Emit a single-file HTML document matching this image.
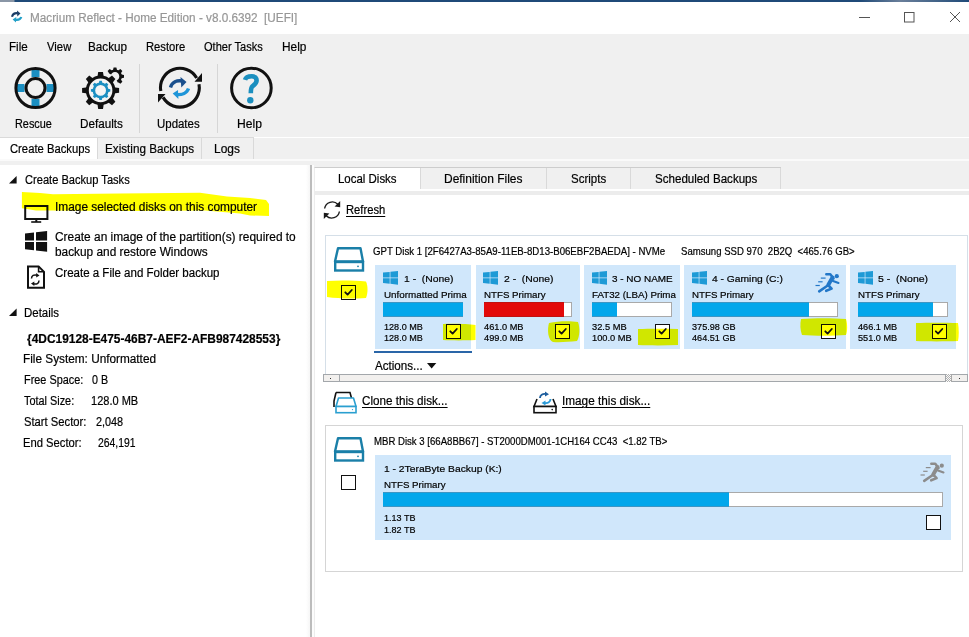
<!DOCTYPE html>
<html><head><meta charset="utf-8">
<style>
*{margin:0;padding:0;box-sizing:border-box}
html,body{width:969px;height:637px;overflow:hidden;background:#fff;position:relative}
body{font-family:"Liberation Sans",sans-serif;color:#000}
.a{position:absolute}
.t{position:absolute;line-height:1;white-space:pre;font-family:"Liberation Sans",sans-serif;transform-origin:0 0;-webkit-text-stroke:0.2px currentColor}
.tile{position:absolute;background:#d0e7fb;top:265px;height:84px}
.bar{position:absolute;background:#fff;border:1px solid #a9a9a9;top:302px;height:15px}
.fill{position:absolute;left:-1px;top:-1px;bottom:-1px;background:#02a7eb;border-top:1px solid #3c96c4;border-bottom:1px solid #3c96c4}
.cb{position:absolute;width:15px;height:15px;border:1.5px solid #111;background:#fff}
svg{position:absolute;left:0;top:0;overflow:visible}
.u{text-decoration:underline;text-underline-offset:1.5px;text-decoration-thickness:1px}
.hl{mix-blend-mode:multiply}
</style></head><body>

<!-- title bar -->
<div class="a" style="left:0;top:0;width:969px;height:2px;background:linear-gradient(90deg,#8a96a6 0,#8a96a6 14px,#1f4a78 15px,#1f4a78 860px,#6a7f9a 900px,#1f4a78 969px)"></div>

<!-- menu bar + toolbar -->
<div class="a" style="left:0;top:34px;width:969px;height:103px;background:#f0f0f0"></div>
<div class="a" style="left:0;top:137px;width:254px;height:1px;background:#dadada"></div>
<div class="a" style="left:139px;top:64px;width:1px;height:69px;background:#d6d6d6"></div>
<div class="a" style="left:217px;top:64px;width:1px;height:69px;background:#d6d6d6"></div>

<!-- tab row -->
<div class="a" style="left:0;top:138px;width:969px;height:27px;background:#f0f0f0"></div>
<div class="a" style="left:0;top:138px;width:97px;height:22px;background:#fff"></div>
<div class="a" style="left:97px;top:138px;width:1px;height:22px;background:#d9d9d9"></div>
<div class="a" style="left:201px;top:138px;width:1px;height:22px;background:#d9d9d9"></div>
<div class="a" style="left:253px;top:138px;width:1px;height:22px;background:#d9d9d9"></div>
<div class="a" style="left:0;top:159px;width:969px;height:2px;background:#fafafa"></div>

<!-- left panel -->
<div class="a" style="left:0;top:165px;width:307px;height:472px;background:#fff"></div>
<div class="a" style="left:306px;top:165px;width:4px;height:472px;background:linear-gradient(90deg,#fff,#f6f6f6)"></div>
<div class="a" style="left:310px;top:165px;width:2px;height:472px;background:#bcbcbc"></div>

<svg width="969" height="637">
  <polygon points="16.6,176 16.6,183.6 9,183.6" fill="#111"/>
  <polygon points="16.6,308.4 16.6,316 9,316" fill="#111"/>
  <!-- monitor -->
  <rect x="25.2" y="206" width="22.2" height="13" fill="none" stroke="#111" stroke-width="2"/>
  <rect x="35.3" y="219" width="2" height="3" fill="#111"/>
  <rect x="31.2" y="221.2" width="10" height="1.6" fill="#111"/>
  <!-- windows logo -->
  <polygon points="25,233.6 34,232.6 34,240.5 25,240.5" fill="#111"/>
  <polygon points="36,232.2 47.1,231 47.1,240.5 36,240.5" fill="#111"/>
  <polygon points="25,242 34,242 34,250.3 25,249.3" fill="#111"/>
  <polygon points="36,242 47.1,242 47.1,251.8 36,250.6" fill="#111"/>
  <!-- file icon -->
  <path d="M28,266.4 L38.6,266.4 L44,271.8 L44,287.8 L28,287.8 Z" fill="#fff" stroke="#111" stroke-width="2"/>
  <path d="M38.6,266.4 L38.6,271.8 L44,271.8" fill="none" stroke="#111" stroke-width="1.6"/>
  <path d="M31.5,278.5 C31.5,275.5 34,274.5 37,275.2" fill="none" stroke="#111" stroke-width="1.5"/>
  <polygon points="36.2,273 39.5,275.5 36.2,277.5" fill="#111"/>
  <path d="M39,280.5 C39,283.5 36.5,284.5 33.5,283.8" fill="none" stroke="#111" stroke-width="1.5"/>
  <polygon points="34.3,281.5 31,283.5 34.3,286" fill="#111"/>
</svg>

<!-- RIGHT PANEL -->
<div class="a" style="left:312px;top:161px;width:657px;height:476px;background:#f0f0f0"></div><div class="a" style="left:312px;top:165px;width:2px;height:472px;background:#fcfcfc"></div>
<div class="a" style="left:314px;top:167px;width:655px;height:470px;background:#fff;border-left:1px solid #ececec;border-top:1px solid #cdcdcd"></div>
<div class="a" style="left:315px;top:191px;width:654px;height:4px;background:#ececec"></div>
<div class="a" style="left:420px;top:168px;width:549px;height:21px;background:#f0f0f0"></div>
<div class="a" style="left:420px;top:168px;width:1px;height:21px;background:#d9d9d9"></div>
<div class="a" style="left:546px;top:168px;width:1px;height:21px;background:#d9d9d9"></div>
<div class="a" style="left:630px;top:168px;width:1px;height:21px;background:#d9d9d9"></div>
<div class="a" style="left:780px;top:168px;width:1px;height:21px;background:#d9d9d9"></div>
<div class="a" style="left:781px;top:167px;width:188px;height:22px;background:#f0f0f0"></div>

<!-- refresh -->
<svg width="969" height="637">
  <path d="M324.6,208.5 A7.8,7.8 0 0 1 337.8,204.2" fill="none" stroke="#1a1a1a" stroke-width="1.4"/>
  <polygon points="340.2,201 340.2,207.2 334.6,206.6" fill="#1a1a1a"/>
  <path d="M339.4,211.5 A7.8,7.8 0 0 1 326.2,215.8" fill="none" stroke="#1a1a1a" stroke-width="1.4"/>
  <polygon points="323.8,219 323.8,212.8 329.4,213.4" fill="#1a1a1a"/>
</svg>

<!-- disk box 1 -->
<div class="a" style="left:325px;top:235px;width:643px;height:140px;border:1px solid #d5dfe8;border-bottom:0"></div>
<svg width="969" height="637">
  <path d="M338,248.2 L360.5,248.2 L363,261.5 L335,261.5 Z" fill="none" stroke="#1a7fa8" stroke-width="2.4" stroke-linejoin="round"/>
  <rect x="335.2" y="262" width="27.8" height="8.5" fill="none" stroke="#1a7fa8" stroke-width="2.4"/>
  <circle cx="358" cy="266.3" r="0.9" fill="#1a7fa8"/>
</svg>
<div class="cb" style="left:341px;top:285px"></div>

<div class="tile" style="left:375px;width:96px"></div>
<div class="tile" style="left:476px;width:104px"></div>
<div class="tile" style="left:584px;width:96px"></div>
<div class="tile" style="left:684px;width:162px"></div>
<div class="tile" style="left:850px;width:106px"></div>
<div class="a" style="left:374px;top:351px;width:98px;height:2px;background:#2a66a8"></div>

<div class="bar" style="left:383px;width:80px"><div class="fill" style="width:80px"></div></div>
<div class="bar" style="left:484px;width:88px"><div class="fill" style="width:80px;background:#e30909;border-color:#c01010"></div></div>
<div class="bar" style="left:592px;width:80px"><div class="fill" style="width:25px"></div></div>
<div class="bar" style="left:692px;width:146px"><div class="fill" style="width:117px"></div></div>
<div class="bar" style="left:858px;width:90px"><div class="fill" style="width:75px"></div></div>

<svg width="969" height="637">
  <defs><g id="wl"><polygon points="0,1.6 6.7,0.9 6.7,6.4 0,6.4"/><polygon points="7.4,0.8 15,0 15,6.4 7.4,6.4"/><polygon points="0,7.2 6.7,7.2 6.7,12.7 0,12"/><polygon points="7.4,7.2 15,7.2 15,13.7 7.4,12.8"/></g></defs>
  <g fill="#1e9ad6">
  <use href="#wl" x="383" y="271"/>
  <use href="#wl" x="483" y="271"/>
  <use href="#wl" x="592" y="271"/>
  <use href="#wl" x="692" y="271"/>
  <use href="#wl" x="858" y="271"/>
  </g>
</svg>

<div class="cb" style="left:446px;top:324px"></div>
<div class="cb" style="left:555px;top:324px"></div>
<div class="cb" style="left:655px;top:324px"></div>
<div class="cb" style="left:821px;top:324px"></div>
<div class="cb" style="left:931.5px;top:324px"></div>

<!-- running man tile 4 -->
<svg width="969" height="637">
 <g style="color:#2277c8"><g id="man" fill="none" stroke-linecap="round" stroke-linejoin="round">
  <circle cx="836.8" cy="276.2" r="2.1" stroke="none" fill="currentColor"/>
  <polyline points="826.3,274.3 830.3,274.3 833.5,278.5" stroke="currentColor" stroke-width="2.5"/>
  <line x1="832.5" y1="277.5" x2="828.2" y2="285" stroke="currentColor" stroke-width="3.9"/>
  <line x1="833" y1="281" x2="838.5" y2="283" stroke="currentColor" stroke-width="2.1"/>
  <line x1="827" y1="286" x2="819.2" y2="291.3" stroke="currentColor" stroke-width="2.6"/>
  <polyline points="828.5,285.5 831.6,288.6 826.2,290.8" stroke="currentColor" stroke-width="2.6"/>
  <line x1="820.8" y1="278.1" x2="825.6" y2="278.1" stroke="currentColor" stroke-width="1.2" stroke-linecap="butt"/>
  <line x1="818.2" y1="281.8" x2="822.6" y2="281.8" stroke="currentColor" stroke-width="1.2" stroke-linecap="butt"/>
  <line x1="815.5" y1="285.5" x2="819.8" y2="285.5" stroke="currentColor" stroke-width="1.2" stroke-linecap="butt"/>
 </g></g>
 <polygon points="427,363 436.3,363 431.65,368.5" fill="#111"/>
</svg>

<!-- scrollbar -->
<div class="a" style="left:323px;top:374px;width:645px;height:8px;background:#f2f0ee;border:1px solid #a3a7ab"></div>
<div class="a" style="left:339px;top:374px;width:1px;height:8px;background:#a3a7ab"></div>
<div class="a" style="left:945px;top:374px;width:6px;height:8px;background:repeating-conic-gradient(#b0b0b0 0 25%,#fafafa 0 50%) 0 0/2px 2px"></div><div class="a" style="left:951px;top:374px;width:1px;height:8px;background:#a3a7ab"></div><div class="a" style="left:944.5px;top:374px;width:1px;height:8px;background:#a3a7ab"></div>
<div class="a" style="left:951px;top:374px;width:1px;height:8px;background:#a8a8a8"></div>
<div class="a" style="left:330px;top:377.5px;width:1px;height:1px;background:#333"></div>
<div class="a" style="left:959px;top:377.5px;width:1px;height:1px;background:#333"></div>

<!-- links -->
<svg width="969" height="637">
  <path d="M336,392.5 L350,392.5 L352,400 M334,407 L334,401 L336,392.5" fill="none" stroke="#111" stroke-width="1.6"/>
  <path d="M338.5,398 L353.5,398 L356,406.5 L336,406.5 Z" fill="#fff" stroke="#2a9fd0" stroke-width="1.6" stroke-linejoin="round"/>
  <rect x="336" y="406.5" width="20" height="6.2" fill="#fff" stroke="#2a9fd0" stroke-width="1.6"/>
  <circle cx="352.5" cy="409.6" r="0.7" fill="#2a9fd0"/>
  <path d="M537,399 L534,406.5 L556,406.5 L553,399" fill="none" stroke="#111" stroke-width="1.6"/>
  <rect x="534" y="406.5" width="22" height="6.2" fill="#fff" stroke="#111" stroke-width="1.6"/>
  <circle cx="552.2" cy="409.6" r="0.8" fill="#111"/>
  <path d="M540,398 C540,395 542.5,393.5 546,394" fill="none" stroke="#1f5f9f" stroke-width="1.9"/>
  <polygon points="545,391.5 549,394.2 545,396.5" fill="#1f5f9f"/>
  <path d="M550.5,399 C550.5,402 548,403.5 544.5,403" fill="none" stroke="#2a9ad8" stroke-width="1.9"/>
  <polygon points="545.5,400.5 541.5,403 545.5,405.5" fill="#2a9ad8"/>
</svg>

<!-- disk box 2 -->
<div class="a" style="left:325px;top:425px;width:638px;height:147px;border:1px solid #d5d5d5"></div>
<svg width="969" height="637">
  <path d="M338,438.2 L360.5,438.2 L363,451.5 L335,451.5 Z" fill="none" stroke="#1a7fa8" stroke-width="2.4" stroke-linejoin="round"/>
  <rect x="335.2" y="452" width="27.8" height="8.5" fill="none" stroke="#1a7fa8" stroke-width="2.4"/>
  <circle cx="358" cy="456.3" r="0.9" fill="#1a7fa8"/>
</svg>
<div class="cb" style="left:341px;top:475px"></div>
<div class="tile" style="left:375px;top:455px;width:576px;height:84.5px"></div>
<div class="bar" style="left:383px;top:492px;width:560px"><div class="fill" style="width:346px"></div></div>
<div class="cb" style="left:926px;top:515px"></div>
<svg width="969" height="637">
 <use href="#man" x="105" y="189.5" style="color:#8c8c8c"/>
</svg>

<!-- toolbar icons -->
<svg width="969" height="637">
  <g fill="#1b8fc2">
    <rect x="31.5" y="68" width="8" height="9"/>
    <rect x="31.5" y="99" width="8" height="9"/>
    <rect x="15.5" y="84" width="9" height="8"/>
    <rect x="46.5" y="84" width="9" height="8"/>
  </g>
  <circle cx="35.5" cy="88" r="19.6" fill="none" stroke="#111" stroke-width="3"/>
  <circle cx="35.5" cy="88" r="9.5" fill="none" stroke="#111" stroke-width="3"/>

  <circle cx="115" cy="76.4" r="5.6" fill="none" stroke="#111" stroke-width="2.6"/>
  <g fill="#111" transform="translate(115,76.4)">
    <polygon points="-2.2,-5.5 2.2,-5.5 1.4,-9.0 -1.4,-9.0" transform="rotate(0)"/>
    <polygon points="-2.2,-5.5 2.2,-5.5 1.4,-9.0 -1.4,-9.0" transform="rotate(45)"/>
    <polygon points="-2.2,-5.5 2.2,-5.5 1.4,-9.0 -1.4,-9.0" transform="rotate(90)"/>
    <polygon points="-2.2,-5.5 2.2,-5.5 1.4,-9.0 -1.4,-9.0" transform="rotate(135)"/>
    <polygon points="-2.2,-5.5 2.2,-5.5 1.4,-9.0 -1.4,-9.0" transform="rotate(-45)"/>
    <polygon points="-2.2,-5.5 2.2,-5.5 1.4,-9.0 -1.4,-9.0" transform="rotate(-90)"/>
    <polygon points="-2.2,-5.5 2.2,-5.5 1.4,-9.0 -1.4,-9.0" transform="rotate(-135)"/>
  </g>
  <circle cx="100.6" cy="90.4" r="19" fill="#f0f0f0"/>
  <g fill="#111" transform="translate(100.6,90.4)">
    <polygon points="-3.2,-13 3.2,-13 2.4000000000000004,-18.5 -2.4000000000000004,-18.5" transform="rotate(0)"/>
    <polygon points="-3.2,-13 3.2,-13 2.4000000000000004,-18.5 -2.4000000000000004,-18.5" transform="rotate(45)"/>
    <polygon points="-3.2,-13 3.2,-13 2.4000000000000004,-18.5 -2.4000000000000004,-18.5" transform="rotate(90)"/>
    <polygon points="-3.2,-13 3.2,-13 2.4000000000000004,-18.5 -2.4000000000000004,-18.5" transform="rotate(135)"/>
    <polygon points="-3.2,-13 3.2,-13 2.4000000000000004,-18.5 -2.4000000000000004,-18.5" transform="rotate(180)"/>
    <polygon points="-3.2,-13 3.2,-13 2.4000000000000004,-18.5 -2.4000000000000004,-18.5" transform="rotate(225)"/>
    <polygon points="-3.2,-13 3.2,-13 2.4000000000000004,-18.5 -2.4000000000000004,-18.5" transform="rotate(270)"/>
    <polygon points="-3.2,-13 3.2,-13 2.4000000000000004,-18.5 -2.4000000000000004,-18.5" transform="rotate(315)"/>
  </g>
  <circle cx="100.6" cy="90.4" r="13.3" fill="#f4f4f4" stroke="#111" stroke-width="3"/>
  <g fill="#1b8fc2" transform="translate(100.6,90.4)">
    <polygon points="-2.0,-6.5 2.0,-6.5 1.2,-9.7 -1.2,-9.7" transform="rotate(0)"/>
    <polygon points="-2.0,-6.5 2.0,-6.5 1.2,-9.7 -1.2,-9.7" transform="rotate(45)"/>
    <polygon points="-2.0,-6.5 2.0,-6.5 1.2,-9.7 -1.2,-9.7" transform="rotate(90)"/>
    <polygon points="-2.0,-6.5 2.0,-6.5 1.2,-9.7 -1.2,-9.7" transform="rotate(135)"/>
    <polygon points="-2.0,-6.5 2.0,-6.5 1.2,-9.7 -1.2,-9.7" transform="rotate(180)"/>
    <polygon points="-2.0,-6.5 2.0,-6.5 1.2,-9.7 -1.2,-9.7" transform="rotate(225)"/>
    <polygon points="-2.0,-6.5 2.0,-6.5 1.2,-9.7 -1.2,-9.7" transform="rotate(270)"/>
    <polygon points="-2.0,-6.5 2.0,-6.5 1.2,-9.7 -1.2,-9.7" transform="rotate(315)"/>
  </g>
  <circle cx="100.6" cy="90.4" r="6.7" fill="none" stroke="#1b8fc2" stroke-width="2.6"/>

  <!-- updates -->
  <path d="M160.8,91.1 A19.4,19.4 0 0 1 196.7,78" fill="none" stroke="#111" stroke-width="3.1"/>
  <polygon points="194.5,81.8 202,81.8 202,73" fill="#111"/>
  <path d="M199,84.3 A19.4,19.4 0 0 1 163.1,97.4" fill="none" stroke="#111" stroke-width="3.1"/>
  <polygon points="165.5,94 158,94 158,102.5" fill="#111"/>
  <path d="M170.5,87.5 C172,82 177,80 182.5,81" fill="none" stroke="#1a4f8c" stroke-width="3.4"/>
  <polygon points="180.5,77 186.5,82 181.3,87.4" fill="#1a4f8c"/>
  <path d="M188.5,88.5 C187,93 182,95 176.5,94.5" fill="none" stroke="#1e95d8" stroke-width="3.4"/>
  <polygon points="178,90 172.7,93.5 178.4,99" fill="#1e95d8"/>

  <!-- help -->
  <circle cx="251.4" cy="88" r="19.8" fill="none" stroke="#111" stroke-width="3"/>
  <path d="M245,79.8 C246,76.5 248.8,76.2 251.8,76.2 C255,76.2 256.6,78.2 256.6,80.6 C256.6,83.5 254,85 252.5,86.3 C251,87.6 250.8,89 250.8,93.2" fill="none" stroke="#1b8fbf" stroke-width="4.6"/>
  <circle cx="250.3" cy="100.2" r="3.2" fill="#1b8fbf"/>

  <!-- title icon -->
  <path d="M12,16.8 C12.8,14 15,12.9 17.8,13.3" fill="none" stroke="#1b3d66" stroke-width="2.2"/>
  <polygon points="17,10.6 20.5,13.5 17.3,16.4" fill="#1b3d66"/>
  <path d="M21.3,17 C20.5,19.4 18.4,20.1 15.6,19.8" fill="none" stroke="#23a0c8" stroke-width="2.2"/>
  <polygon points="16.3,17 12.6,19.6 16,22.5" fill="#23a0c8"/>
  <!-- window controls -->
  <path d="M859,17.5 L870,17.5" stroke="#555" stroke-width="1"/>
  <rect x="904.5" y="12.5" width="9.5" height="9.5" fill="none" stroke="#555" stroke-width="1"/>
  <path d="M950,12 L960,22 M960,12 L950,22" stroke="#555" stroke-width="1"/>
</svg>

<div class="t " style="left:30.05px;top:12.00px;font-size:12.3px;color:#969696;transform:scaleX(0.9542)">Macrium Reflect - Home Edition - v8.0.6392  [UEFI]</div>
<div class="t " style="left:9.26px;top:41.00px;font-size:12.3px;color:#000;transform:scaleX(0.9433)">File</div>
<div class="t " style="left:46.60px;top:41.00px;font-size:12.3px;color:#000;transform:scaleX(0.9190)">View</div>
<div class="t " style="left:88.25px;top:41.00px;font-size:12.3px;color:#000;transform:scaleX(0.9533)">Backup</div>
<div class="t " style="left:145.59px;top:41.00px;font-size:12.3px;color:#000;transform:scaleX(0.9119)">Restore</div>
<div class="t " style="left:203.70px;top:41.00px;font-size:12.3px;color:#000;transform:scaleX(0.8999)">Other Tasks</div>
<div class="t " style="left:281.73px;top:41.00px;font-size:12.3px;color:#000;transform:scaleX(0.9652)">Help</div>
<div class="t " style="left:14.82px;top:118.00px;font-size:12.3px;color:#000;transform:scaleX(0.8836)">Rescue</div>
<div class="t " style="left:79.75px;top:118.00px;font-size:12.3px;color:#000;transform:scaleX(0.9508)">Defaults</div>
<div class="t " style="left:157.30px;top:118.00px;font-size:12.3px;color:#000;transform:scaleX(0.9309)">Updates</div>
<div class="t " style="left:236.51px;top:118.00px;font-size:12.3px;color:#000;transform:scaleX(0.9856)">Help</div>
<div class="t " style="left:9.70px;top:143.00px;font-size:12.3px;color:#000;transform:scaleX(0.9148)">Create Backups</div>
<div class="t " style="left:105.15px;top:143.00px;font-size:12.3px;color:#000;transform:scaleX(0.9504)">Existing Backups</div>
<div class="t " style="left:214.03px;top:143.00px;font-size:12.3px;color:#000;transform:scaleX(0.9719)">Logs</div>
<div class="t " style="left:24.90px;top:174.00px;font-size:12.3px;color:#000;transform:scaleX(0.9031)">Create Backup Tasks</div>
<div class="t " style="left:55.03px;top:201.00px;font-size:12.3px;color:#000;transform:scaleX(0.9661)">Image selected disks on this computer</div>
<div class="t " style="left:55.40px;top:231.00px;font-size:12.3px;color:#000;transform:scaleX(0.9676)">Create an image of the partition(s) required to</div>
<div class="t " style="left:55.40px;top:246.00px;font-size:12.3px;color:#000;transform:scaleX(0.9632)">backup and restore Windows</div>
<div class="t " style="left:55.40px;top:267.00px;font-size:12.3px;color:#000;transform:scaleX(0.9361)">Create a File and Folder backup</div>
<div class="t " style="left:23.87px;top:307.00px;font-size:12.3px;color:#000;transform:scaleX(0.9331)">Details</div>
<div class="t " style="left:27.00px;top:333.00px;font-size:12.3px;color:#000;transform:scaleX(0.9700);font-weight:bold">{4DC19128-E475-46B7-AEF2-AFB987428553}</div>
<div class="t " style="left:23.44px;top:353.00px;font-size:12.3px;color:#000;transform:scaleX(0.9588)">File System: Unformatted</div>
<div class="t " style="left:23.52px;top:374.00px;font-size:12.3px;color:#000;transform:scaleX(0.8846)">Free Space:</div>
<div class="t " style="left:91.90px;top:374.00px;font-size:12.3px;color:#000;transform:scaleX(0.8710)">0 B</div>
<div class="t " style="left:24.40px;top:395.00px;font-size:12.3px;color:#000;transform:scaleX(0.8844)">Total Size:</div>
<div class="t " style="left:90.50px;top:395.00px;font-size:12.3px;color:#000;transform:scaleX(0.8964)">128.0 MB</div>
<div class="t " style="left:24.40px;top:416.00px;font-size:12.3px;color:#000;transform:scaleX(0.9128)">Start Sector:</div>
<div class="t " style="left:95.80px;top:416.00px;font-size:12.3px;color:#000;transform:scaleX(0.8825)">2,048</div>
<div class="t " style="left:23.49px;top:437.00px;font-size:12.3px;color:#000;transform:scaleX(0.9135)">End Sector:</div>
<div class="t " style="left:98.00px;top:437.00px;font-size:12.3px;color:#000;transform:scaleX(0.8428)">264,191</div>
<div class="t " style="left:338.37px;top:173.00px;font-size:12.3px;color:#000;transform:scaleX(0.9316)">Local Disks</div>
<div class="t " style="left:444.43px;top:173.00px;font-size:12.3px;color:#000;transform:scaleX(0.9724)">Definition Files</div>
<div class="t " style="left:571.00px;top:173.00px;font-size:12.3px;color:#000;transform:scaleX(0.9350)">Scripts</div>
<div class="t " style="left:654.70px;top:173.00px;font-size:12.3px;color:#000;transform:scaleX(0.9415)">Scheduled Backups</div>
<div class="t u" style="left:345.59px;top:204.00px;font-size:12.3px;color:#000;transform:scaleX(0.9119)">Refresh</div>
<div class="t " style="left:374.60px;top:360.00px;font-size:12.3px;color:#000;transform:scaleX(0.9450)">Actions...</div>
<div class="t u" style="left:362.30px;top:395.00px;font-size:12.3px;color:#000;transform:scaleX(0.9488)">Clone this disk...</div>
<div class="t u" style="left:561.64px;top:395.00px;font-size:12.3px;color:#000;transform:scaleX(0.9566)">Image this disk...</div>
<div class="t " style="left:373.40px;top:247.00px;font-size:10.3px;color:#000;transform:scaleX(0.9362)">GPT Disk 1 [2F6427A3-85A9-11EB-8D13-B06EBF2BAEDA] - NVMe</div>
<div class="t " style="left:681.40px;top:247.00px;font-size:10.3px;color:#000;transform:scaleX(0.9304)">Samsung SSD 970  2B2Q  &lt;465.76 GB&gt;</div>
<div class="t " style="left:373.80px;top:437.00px;font-size:10.3px;color:#000;transform:scaleX(0.9324)">MBR Disk 3 [66A8BB67] - ST2000DM001-1CH164 CC43  &lt;1.82 TB&gt;</div>
<div class="a" style="left:0;top:0;width:467px;height:637px;overflow:hidden"><div class="t " style="left:403.50px;top:274.00px;font-size:9.9px;color:#000;transform:scaleX(1.0489)">1 -  (None)</div></div>
<div class="a" style="left:0;top:0;width:467px;height:637px;overflow:hidden"><div class="t " style="left:383.70px;top:290.00px;font-size:9.9px;color:#000;transform:scaleX(0.9979)">Unformatted Prima</div></div>
<div class="t " style="left:383.70px;top:322.00px;font-size:9.9px;color:#000;transform:scaleX(0.9184)">128.0 MB</div>
<div class="t " style="left:383.70px;top:333.00px;font-size:9.9px;color:#000;transform:scaleX(0.9184)">128.0 MB</div>
<div class="a" style="left:0;top:0;width:577px;height:637px;overflow:hidden"><div class="t " style="left:503.50px;top:274.00px;font-size:9.9px;color:#000;transform:scaleX(1.0489)">2 -  (None)</div></div>
<div class="a" style="left:0;top:0;width:577px;height:637px;overflow:hidden"><div class="t " style="left:483.70px;top:290.00px;font-size:9.9px;color:#000;transform:scaleX(0.9840)">NTFS Primary</div></div>
<div class="t " style="left:483.70px;top:322.00px;font-size:9.9px;color:#000;transform:scaleX(0.9348)">461.0 MB</div>
<div class="t " style="left:483.70px;top:333.00px;font-size:9.9px;color:#000;transform:scaleX(0.9348)">499.0 MB</div>
<div class="a" style="left:0;top:0;width:677px;height:637px;overflow:hidden"><div class="t " style="left:611.50px;top:274.00px;font-size:9.9px;color:#000;transform:scaleX(1.0055)">3 - NO NAME</div></div>
<div class="a" style="left:0;top:0;width:677px;height:637px;overflow:hidden"><div class="t " style="left:592.40px;top:290.00px;font-size:9.9px;color:#000;transform:scaleX(0.9885)">FAT32 (LBA) Prima</div></div>
<div class="t " style="left:592.40px;top:322.00px;font-size:9.9px;color:#000;transform:scaleX(0.9411)">32.5 MB</div>
<div class="t " style="left:592.40px;top:333.00px;font-size:9.9px;color:#000;transform:scaleX(0.9411)">100.0 MB</div>
<div class="a" style="left:0;top:0;width:843px;height:637px;overflow:hidden"><div class="t " style="left:712.20px;top:274.00px;font-size:9.9px;color:#000;transform:scaleX(1.0406)">4 - Gaming (C:)</div></div>
<div class="a" style="left:0;top:0;width:843px;height:637px;overflow:hidden"><div class="t " style="left:692.10px;top:290.00px;font-size:9.9px;color:#000;transform:scaleX(0.9840)">NTFS Primary</div></div>
<div class="t " style="left:692.10px;top:322.00px;font-size:9.9px;color:#000;transform:scaleX(0.9238)">375.98 GB</div>
<div class="t " style="left:692.10px;top:333.00px;font-size:9.9px;color:#000;transform:scaleX(0.9238)">464.51 GB</div>
<div class="a" style="left:0;top:0;width:953px;height:637px;overflow:hidden"><div class="t " style="left:878.10px;top:274.00px;font-size:9.9px;color:#000;transform:scaleX(1.0617)">5 -  (None)</div></div>
<div class="a" style="left:0;top:0;width:953px;height:637px;overflow:hidden"><div class="t " style="left:858.00px;top:290.00px;font-size:9.9px;color:#000;transform:scaleX(0.9840)">NTFS Primary</div></div>
<div class="t " style="left:858.00px;top:322.00px;font-size:9.9px;color:#000;transform:scaleX(0.9278)">466.1 MB</div>
<div class="t " style="left:858.00px;top:333.00px;font-size:9.9px;color:#000;transform:scaleX(0.9278)">551.0 MB</div>
<div class="t " style="left:383.70px;top:464.00px;font-size:9.9px;color:#000;transform:scaleX(1.0419)">1 - 2TeraByte Backup (K:)</div>
<div class="t " style="left:383.70px;top:480.00px;font-size:9.9px;color:#000;transform:scaleX(0.9840)">NTFS Primary</div>
<div class="t " style="left:383.70px;top:513.00px;font-size:9.9px;color:#000;transform:scaleX(0.9144)">1.13 TB</div>
<div class="t " style="left:383.70px;top:525.00px;font-size:9.9px;color:#000;transform:scaleX(0.9144)">1.82 TB</div>

<!-- yellow highlights -->
<svg width="969" height="637" class="hl">
 <g fill="#ffff00">
  <path d="M21.9,192 L40,193 L53,194.3 L120,193.5 L200,192.8 L227,196.5 L250,198 L266,200 L269,204 L269,216 L250,215.5 L240,213.5 L205,210.6 L120,211 L52,210.4 L36,210.4 L21.9,208.2 Z"/>
  <path d="M327,281 C340,280 355,280.5 366,281.5 C368,286 368,293 366,298 C350,299 338,298.5 327,297 Z"/>
  <path d="M443,324 C455,323.5 468,324 475.5,325 L475.5,340 C465,340.5 452,340.5 443,340 Z"/>
  <path d="M549,323 C558,321 570,321 578,322 C580,328 580,336 577,341 C568,342 560,342.5 553,342 C548,340 547,330 549,323 Z"/>
  <path d="M638,329 C650,328.5 665,328.5 678,329 L678,345 C665,345.5 650,345.5 638,345 Z"/>
  <path d="M801,319 C815,318 832,318 846,319 C847.5,324 847.5,331 846,335 C832,336 815,336 802,335 C800,330 800,324 801,319 Z"/>
  <path d="M916,323 C928,322.5 945,322.5 958,323 C959,329 959,336 958,341 C945,341.5 928,341.5 916,341 Z"/>
 </g>
</svg>
<svg width="969" height="637">
 <g fill="none" stroke="#111" stroke-width="1.8" stroke-linecap="round" stroke-linejoin="round">
  <path d="M345.3,292.3 L347.6,294.6 L351.8,290"/>
  <path d="M450.3,331.3 L452.6,333.6 L456.8,329"/>
  <path d="M559.3,331.3 L561.6,333.6 L565.8,329"/>
  <path d="M659.3,331.3 L661.6,333.6 L665.8,329"/>
  <path d="M825.3,331.3 L827.6,333.6 L831.8,329"/>
  <path d="M935.8,331.3 L938.1,333.6 L942.3,329"/>
 </g>
</svg>
</body></html>
